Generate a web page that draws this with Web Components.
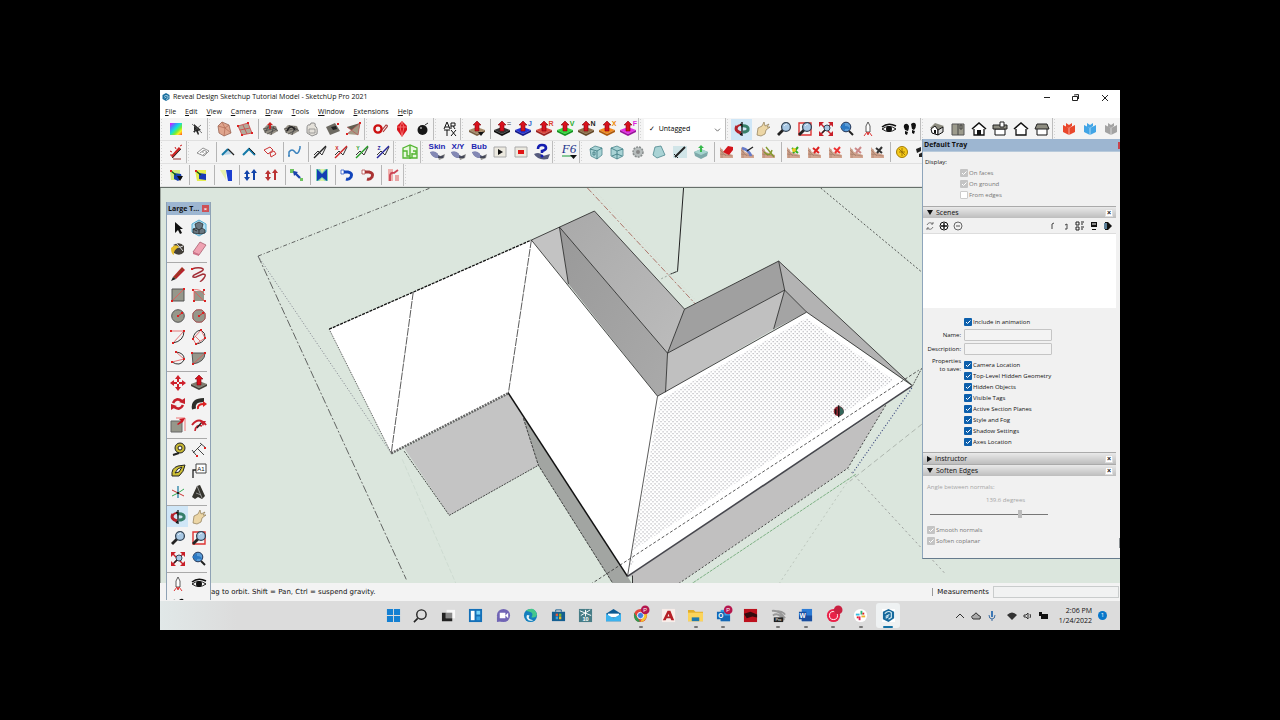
<!DOCTYPE html>
<html lang="en">
<head>
<meta charset="utf-8">
<title>Reveal Design Sketchup Tutorial Model - SketchUp Pro 2021</title>
<style>
html,body{margin:0;height:100%;background:#000;overflow:hidden}
body{box-sizing:border-box;padding:12.5vh 12.5vw;font:8px/10px "Open Sans","Noto Sans",sans-serif;color:#111}
</style>
</head>
<body>
<desktop-screen>
  <app-window>
    <title-bar slot="title">Reveal Design Sketchup Tutorial Model - SketchUp Pro 2021</title-bar>
    <menu-bar slot="menu"></menu-bar>
    <tool-bar slot="tools" tools="rainbow selplus | softsel meshred - sandup smoove stamp drape flip | keyring ruby bomb | artx | pushmix - push:= push:J push:R push:V push:N push:X push:F | @tags | orbit! pan zoom zoomwin extents prev camera look walk | iso top front right back left | ored oblue ogray"></tool-bar>
    <tool-bar slot="tools" tools="wand | quad - roofa roofb roofred - curve - cut:#222: cut:#c22:X cut:#292:Y cut:#229:Z | greenbox | skin:Skin skin:X/Y skin:Bub play stop help | fsix | cubea cubeb ring shape knife layer - stred stblue stgreen - terra:#3a2 terra:#d22 terra:#e33 terra:#c88 terra:#333 - coin steps"></tool-bar>
    <tool-bar slot="tools" tools="ya - yb - bluewall - arrows:#14a arrows:#b33 - link - bow - bend:#14b bend:#a33 - pink |"></tool-bar>
    <model-view slot="canvas"></model-view>
    <side-tray slot="tray"></side-tray>
    <tool-palette slot="palette"></tool-palette>
    <status-bar slot="status"></status-bar>
  </app-window>
  <task-bar></task-bar>
</desktop-screen>
<script>
const p=(f,d,s='')=>`<path fill="${f}" d="${d}" ${s}/>`;
const l=(c,d,w=1,s='')=>`<path fill="none" stroke="${c}" stroke-width="${w}" d="${d}" ${s}/>`;
const c=(x,y,r,f,s='')=>`<circle cx="${x}" cy="${y}" r="${r}" fill="${f}" ${s}/>`;
const t=(x,y,z,f,s,e='')=>`<text x="${x}" y="${y}" font-size="${z}" fill="${f}" font-family="Liberation Sans,sans-serif" text-anchor="middle" ${e}>${s}</text>`;
const slab=(a,b)=>p(a,'M0 9 8 6 16 9 8 13Z')+p(b,'M0 9 8 13 16 9V11L8 15 0 11Z');
const upArrow=p('#d8111c','M8 0 12 4H10V10H6V4H4Z','stroke="#7d0910" stroke-width=".6"');
const dots=(...a)=>a.map(([x,y])=>p('#d22',`M${x-1} ${y-1}h2v2h-2z`)).join('');
const lens=p('#222','M1 13 6 8 8 10 3 15Z')+c(10,6,4.4,'#a8c8e4','stroke="#345" stroke-width="1.3"')+l('#e8f3fb','M8 5Q9 3 11 3',1);
const house=p('#fff','M3 7H13V14H3Z','stroke="#111" stroke-width="1.3"')+p('#fff','M1 8 8 2 15 8','stroke="#111" stroke-width="1.6"');
const mesh=p('#948f84','M1 8 5 4 14 5 16 10 9 14 3 12Z')+l('#444','M1 8 10 6 16 10M3 12 7 4M9 14 12 5M2 10 14 7M5 13 15 8',.7);
const terrain=p('#d3a590','M2 3 6 8 15 11V14H2Z')+l('#a07864','M2 6 8 12M4 5V14M2 10 14 12',.6);
const eye=p('#fff','M1 8Q8 3 15 8 8 13 1 8Z','stroke="#111"')+c(8,8,3,'#111')+l('#111','M1 6Q7 1 15 5',1.6);
const rocket=p('#fff','M8 1Q11 4 10 11H6Q5 4 8 1Z','stroke="#333" stroke-width=".8"')+l('#d33','M4 15 7 11 8 14 9 11 12 15',1);
const cube=f=>p(f,'M2 4 8 7 14 4V11L8 14 2 11Z')+l('#fff','M8 7V14',.8,'opacity=".7"')+p(f,'M5 2 8 4V7L5 6ZM8 4 11 2V5L8 7Z');
const glass=(d,x='')=>p('#a9d3d5',d,'stroke="#4b878d" stroke-width=".8"')+x;
const wedge=p('#d1e5e8','M1 2H15V14H1Z');
const feet=p('#111','M2 4Q5 1 7 5 7 8 6 10L3 9Q1 6 2 4ZM3 10 6 11 5 14 3 13ZM9 3Q13 0 14 4 14 7 12 9L10 8ZM10 9 13 10 12 13 10 12Z');
const icons={
rainbow:()=>p('url(#rb)','M2 2H14V14H2Z')+'<defs><linearGradient id="rb" x1="0" y1="0" x2="1" y2="1"><stop stop-color="#f0f"/><stop offset=".25" stop-color="#48f"/><stop offset=".45" stop-color="#1dd"/><stop offset=".65" stop-color="#7e3"/><stop offset=".8" stop-color="#fe2"/><stop offset="1" stop-color="#f42"/></linearGradient></defs>',
selplus:()=>p('#222','M5 3 5 12 7 10 9 14 10 13 9 10 12 9Z')+l('#555','M3 3 13 12M12 4 4 11',.8),
softsel:()=>p('#dfa58d','M2 5 6 1 13 4 15 12 8 15 3 12Z','stroke="#8c5848" stroke-width=".7"')+l('#b06a54','M2 5 9 7 15 12M9 7 8 15M6 1 9 7 13 4',.7),
meshred:()=>p('#b3a99a','M1 5 11 2 15 12 5 14Z')+l('#c44','M1 5 11 2 15 12 5 14ZM3 9 13 7M6 4 10 13',.8)+dots([1,5],[11,2],[15,12],[5,14]),
sandup:()=>mesh+p('#c22','M8 1 11 4H9V8H7V4H5Z'),smoove:()=>mesh+l('#222','M4 10Q8 2 12 9',1.5),
stamp:()=>p('#e4e1da','M3 7Q3 3 6 4 6 1 10 2 12 2 11 5 14 6 13 13L8 15 3 12Z','stroke="#777" stroke-width=".8"')+l('#888','M5 8H11V12H5Z',.8),
drape:()=>p('#6d6a62','M1 6 10 2 15 10 5 14Z')+p('#222','M6 6 11 5 12 8 8 9Z')+dots([13,3]),
flip:()=>p('#625e50','M1 6 14 2 12 14Z')+p('#a39b85','M14 2 12 14 1 13Z')+l('#b55','M1 13 14 2 12 14M1 6 12 14',.7)+dots([14,2],[1,13]),
keyring:()=>c(5,8,3.6,'none','stroke="#c11" stroke-width="2.4"')+l('#a33','M9 9 13 4Q15 4 14 6L10 11',1.2),
ruby:()=>p('#d7141c','M8 0 13 5 13 9 8 16 3 9 3 5Z')+l('#ff8b8b','M3 6H13M6 6 8 15 10 6 8 1Z',.7),
bomb:()=>c(7.5,9,5,'#181818')+c(6,7,1,'#aaa')+l('#333','M10 4 13 2'),
artx:()=>l('#111','M2 8 5 1 8 8M3 6H7M9 8V2H13V5H9M11 5 13 8M2 9H8M5 9V15M9 9 14 15M14 9 9 15',1),
pushmix:()=>slab('#a78b68','#7a6044')+upArrow+p('#111','M9 11H15L12 15Z'),
push:a=>{const m={'=':['#333','#111','#888'],J:['#2233d6','#151a8a','#36c'],R:['#e0483f','#9c2320','#d43'],V:['#31dd3c','#149420','#2a2'],N:['#927049','#654a2b','#222'],X:['#f38b1e','#ad5a0c','#e80'],F:['#e62ae6','#9a129c','#d2d']}[a];return slab(m[0],m[1])+upArrow+t(15,5,7,m[2],a,'font-weight="700"')},
orbit:()=>l('#b3222c','M3 5Q0 10 7 12',3)+l('#367f6a','M7 5Q15 4 14 9 13 11 9 11',3)+l('#b3222c','M3 6Q4 4 7 4',2)+l('#111','M8 1V15M8 4 6 3M8 12 6 14',1.3),
pan:()=>p('#ecd6a6','M2 14 3 7 7 5 9 1 10 5 14 3 12 6 15 6 11 9 10 13 6 15Z','stroke="#8c7a54" stroke-width=".7"'),
zoom:()=>lens,zoomwin:()=>l('#d33','M2 2H14V14H2Z',1.4)+lens,
extents:()=>[0,90,180,270].map(r=>p('#c8202a','M0 0H5L3 2 6 5 5 6 2 3 0 5Z',`transform="rotate(${r} 8 8) translate(1 1)"`)).join('')+c(9,7,3,'#a8c8e4','stroke="#345"')+l('#222','M4 12 7 9',1.5),
prev:()=>c(7,6,4.8,'#5a9bd6','stroke="#235"')+p('#2b78c2','M1 6 6 2V5Q11 5 11 9 9 7 6 8V10Z')+l('#222','M10 10 14 14',2),
camera:()=>rocket,look:()=>eye,walk:()=>feet,
iso:()=>p('#8d8c80','M1 7 6 2 15 5 11 9Z')+p('#fff','M2 8 6 5 9 9V14L3 12Z','stroke="#111"')+p('#ddd','M9 9 14 6V11L9 14Z','stroke="#111"')+p('#111','M5 9H7V13L5 12Z'),
top:()=>p('#9c9b8d','M2 3H14V14H2Z','stroke="#555"')+l('#444','M8 3V14M10 4H12V8H10Z'),
front:()=>house+p('#111','M6 9H10V14H6Z'),
right:()=>p('#fff','M3 8H13V14H3Z','stroke="#111"')+p('#8d8c80','M1 4H15V8H1Z','stroke="#222"')+p('#fff','M8 1H12V6H8Z','stroke="#222"'),
back:()=>house,left:()=>p('#fff','M3 7H13V14H3Z','stroke="#111"')+p('#8d8c80','M3 3H13L15 8H1Z','stroke="#222"'),
ored:()=>cube('#e9472c'),oblue:()=>cube('#42a5e6'),ogray:()=>cube('#a3a3a3'),
wand:()=>l('#c22','M4 13 12 4',3)+l('#333','M4 14 13 5',1)+l('#c22','M2 7 4 8M2 11 4 11M7 3 8 5M12 2 14 1',1)+l('#933','M5 15H13',1),
quad:()=>p('#fff','M2 9 8 4 14 7 9 12Z','stroke="#777" stroke-width=".8"')+l('#777','M5 9 9 6 12 8 8 11M7 8H9',.8),
roofa:()=>p('#b9d6e8','M4 11 8 5 12 10Z')+l('#157aa8','M2 11 8 5',2)+l('#222','M8 5 14 11',1.2),roofb:()=>l('#157aa8','M2 11 8 5 14 11',2)+l('#222','M8 4 14 10',1),
roofred:()=>l('#c33','M2 6 8 3 11 6 6 10ZM8 9 12 7 14 10 9 13Z',1),
curve:()=>l('#3c83bd','M2 12V8Q5 4 8 8T13 4V2',1.5)+c(2,12,1,'#3c83bd'),
cut:(k,x)=>l('#333','M2 11 6 7 10 11 14 3',1)+l(k,'M2 14 14 2',1.4)+t(4,6,5,k,x||'','font-weight="700"'),
greenbox:()=>p('#e9f9df','M1 4 8 1 15 4V14H1Z','stroke="#54b533" stroke-width="1.3"')+l('#54b533','M1 7H5V12H8M8 1V15M11 7H14V10H10M10 14V9',1.4),
skin:x=>p('#555a7d','M1 8Q3 13 8 14H14L15 11Q10 14 8 9Z')+p('#8388b4','M1 8Q6 6 9 10L9 14Q3 14 1 8Z')+p('#3338','M9 13 16 10 15 14 10 16Z')+t(8,5,8,'#1b25b0',x,'font-weight="700"'),
play:()=>p('#ece9df','M2 3H14V13H2Z','stroke="#aaa"')+p('#111','M6 5 11 8 6 11Z'),stop:()=>p('#ece9df','M2 3H14V13H2Z','stroke="#aaa"')+p('#e01515','M5 6H11V10H5Z'),
help:()=>p('#555a7d','M0 10Q6 7 9 12L16 10 14 15Q4 17 0 10Z')+l('#141eb0','M4 5Q4 1 8 1 12 1 12 4 12 6 8 7V9',2.6)+c(8,12,1.5,'#141eb0'),
fsix:()=>t(8,9,13,'#23348c','F6','style="font-family:Liberation Serif;font-style:italic"')+l('#159a38','M1 12H12')+p('#111','M9 11H16L12.5 15Z'),
cubea:()=>glass('M2 5 7 2 14 4V11L9 15 3 12Z','<path fill="none" stroke="#37757b" stroke-width=".8" d="M2 5 9 7 14 4M9 7V15M5 8H7V11H5Z"/>'),
cubeb:()=>glass('M2 4 8 2 14 5V12L8 15 2 12Z','<path fill="none" stroke="#37757b" stroke-width=".8" d="M2 4 8 7 14 5M8 7V15M3 12 8 10 13 12"/>'),
ring:()=>c(8,8,5,'#b7bdbd','stroke="#878c8c" stroke-width="1.5" stroke-dasharray="2 1"')+c(8,8,2,'#888'),
shape:()=>glass('M4 3 10 2 14 11 6 14 2 11Z'),knife:()=>wedge+l('#222','M3 13 13 3',2)+l('#222','M2 10 6 14'),
layer:()=>p('#7ea9aa','M1 8 8 5 15 8 14 12 8 15 2 12Z')+p('#a5d4cf','M1 8 8 5 15 8 8 11Z')+p('#38b84c','M8 1 11 4H9V8H7V4H5Z'),
stred:()=>terrain+p('#d4151c','M5 8 10 2 15 3V6L11 11Z'),stblue:()=>terrain+l('#667bc8','M3 4Q10 6 12 12',2.6)+l('#222','M8 7 14 3',1.4),
stgreen:()=>terrain+l('#829a2e','M4 8Q10 14 12 6M6 3 14 13',1.4),terra:k=>terrain+l(k,'M7 4 13 9M13 3 8 9',2)+(k==='#3a2'?c(9,6,2,'#ec2'):''),
coin:()=>c(8,8,5.5,'#f5c918','stroke="#a37c08"')+l('#8a6504','M8 4V12M5 8H11M5 5 11 11',.8),steps:()=>p('#222','M1 5 6 3V7L2 9ZM4 10 8 8V13H4Z'),
ya:()=>p('#d5ec7f','M2 3H12V13H3Z')+p('#173fae','M6 6 13 7 14 11 10 14 6 12Z')+p('#111','M9 9H15L12 14Z')+l('#161','M3 4 8 8',1.4)+dots([3,4]),yb:()=>p('#e4ed4f','M2 3H13V14H4Z')+p('#1737b8','M6 6 13 7V13L6 12Z')+l('#151','M3 4 8 8',1.4)+dots([3,4]),
bluewall:()=>p('#e7efad','M2 3H8V13Z')+p('#1c3fd1','M8 3H14V14H10Z'),
arrows:k=>p(k,'M4 3 7 7H5V10H7L4 14 1 10H3V7H1ZM10 13V6H8L11 2 14 6H12V13Z'),
link:()=>l('#1a43ad','M5 5 11 11',2.4)+p('#6fc261','M1 2H5V6H1ZM11 11H14V14H11Z')+p('#1a43ad','M4 4 9 5 5 9Z'),
bow:()=>p('#74d1b0','M2 2H14V14H2Z')+p('#143eb4','M3 2 8 7 13 2V14L8 10 3 14Z')+p('#dcefa5','M6 2H11L8 6ZM5 14H11L8 11Z'),
bend:k=>l(k,'M4 5H9Q14 6 12 10 10 13 7 12',3)+p('#fff','M2 3H5V7H2Z',`stroke="${k}" stroke-width=".7"`),
pink:()=>p('#efb0ad','M3 2H8V14H3Z')+l('#c45','M5 14V8Q6 5 9 6L13 3',1.8)+p('#e9a5a5','M10 8H14V14H10Z'),
arrow:()=>p('#111','M5 2V13L8 10 10 14 12 13 10 9H13Z'),
component:()=>p('#b2e1f6','M8 0 15 4V12L8 16 1 12V4Z','stroke="#59aed1"')+p('#697780','M4 4 8 2 12 4 11 8 14 10V13L9 14 2 13V9L5 8Z','stroke="#222" stroke-width=".7"')+l('#222','M5 8 8 10 11 8M8 10V14M2 9 6 11',.8),
paint:()=>p('#44403a','M3 4Q10 0 14 5V11Q10 16 4 12Z')+l('#ddd','M3 4Q7 8 13 5M6 2Q10 6 13 10',1)+p('#e6bd2a','M1 7Q6 2 9 6 3 9 4 14 1 13 1 7Z'),
erase:()=>p('#efa2b2','M2 11 9 1 15 4 8 14Z','stroke="#a85f70" stroke-width=".8"')+p('#cd7288','M2 11 8 13V15L2 13Z'),
pencil:()=>p('#b7222c','M3 11 12 1 15 4 6 13Z')+p('#222','M1 15 3 11 6 13Z')+l('#661','M4 12 13 2',.7),
freehand:()=>l('#a32e36','M1 3Q6 1 10 2 14 3 11 5L3 9Q0 12 5 11L12 8Q16 8 13 12T9 15',1.5)+dots([1,3]),
rect:()=>p('#96978b','M2 2H14V14H2Z','stroke="#555"')+l('#e55','M2 14 14 2',.8)+dots([2,14],[14,2]),
rrect:()=>p('#96978b','M3 4H13V14H3Z')+l('#e55','M3 14V4L13 14M2 3Q9 1 14 8',.8)+dots([2,3],[3,14],[13,3],[14,14]),
circle:()=>c(8,8,6.3,'#96978b','stroke="#555"')+l('#d22','M8 8 12 5')+dots([8,8],[12,5]),
polygon:()=>p('#96978b','M5 2H11L14 5V11L11 14H5L2 11V5Z','stroke="#966"')+c(8,8,6.5,'none','stroke="#a55" stroke-width=".7"')+l('#d22','M8 8 12 5')+dots([8,8],[12,5]),
arc:()=>l('#333','M14 2Q14 12 3 14')+l('#d55','M1 2H14L3 14',.8)+dots([1,2],[14,2],[3,14]),
arc2:()=>l('#333','M2 10Q3 2 10 1 15 4 14 9 12 14 5 15',1)+l('#d55','M10 1 14 9 5 15 2 10 10 1M4 7 9 12',.8)+dots([10,1],[2,10],[14,9],[5,15]),
arc3:()=>l('#333','M6 2Q15 3 14 10 10 17 2 12')+l('#d55','M6 2 14 9 2 12',.8)+dots([2,12],[14,9],[6,2]),
pie:()=>p('#96978b','M1 3H14Q14 12 2 14Z','stroke="#555"')+l('#d55','M14 3 2 14',.8)+dots([1,3],[14,3],[2,14]),
move:()=>[0,90,180,270].map(r=>p('#cf202b','M8 0 11 4H9V7H7V4H5Z',`transform="rotate(${r} 8 8)"`)).join(''),
pushpull:()=>slab('#7e7b6d','#45423a')+upArrow,
rotate:()=>l('#c6202b','M3 7Q6 1 12 5M13 9Q10 15 4 11',2.6)+p('#c6202b','M9 6 15 2V8ZM7 10 1 14V8Z'),
follow:()=>l('#2e2e2a','M3 13Q1 4 13 4',4)+l('#d22','M7 13Q6 8 13 8',2)+p('#d22','M12 5 16 8 12 11Z'),
scale:()=>p('#96978b','M1 4H12V15H1Z','stroke="#666"')+l('#e77','M6 1H15V14')+p('#ce1420','M8 8 13 5 15 1 9 2 11 4 7 7Z'),
offset:()=>l('#c6202b','M1 8Q8-1 15 8',2)+l('#c6202b','M4 14Q5 7 11 9',1.6)+l('#222','M6 11 11 5',1.3)+p('#c6202b','M9 4 15 4 12 9Z'),
tape:()=>c(10,6,5,'#c7b735','stroke="#222"')+c(10,6,2,'#fff','stroke="#222"')+l('#222','M9 11 3 13',2),
dim:()=>l('#333','M2 11 11 2M1 8 5 13M9 1 15 6M6 6 13 13',.9)+dots([6,14],[14,6]),
prot:()=>p('#cbbd34','M2 13Q1 5 8 3L15 2Q14 9 9 13Z','stroke="#222"')+p('#fff','M5 10Q7 5 12 4L9 9Z','stroke="#222"'),
label:()=>p('#fff','M5 1H15V10H5Z','stroke="#444"')+t(10,8,6,'#111','A1')+l('#222','M2 15V7H5',1.3),
axes:()=>l('#c33','M8 9 14 12M2 6 8 9')+l('#38a','M8 14V2',1.4)+l('#3a5','M8 9 14 5M2 12 8 9')+l('#222','M7 9H9',2),
text3d:()=>p('#35342e','M6 2 9 1 14 12 11 15 7 13 4 15 1 13Z')+l('#aaa','M6 2 11 14M5 9 10 11',.8)
};
const svg=(name,cls='')=>{const[n,...a]=name.split(':');return `<svg class="${cls}" viewBox="0 0 16 16" width="16" height="16" aria-hidden="true">${icons[n](...a)}</svg>`};
function define(tag,css,html){
  customElements.define(tag,class extends HTMLElement{
    connectedCallback(){
      if(this.shadowRoot)return;
      this.attachShadow({mode:'open'}).innerHTML=`<style>:host,*{box-sizing:border-box}button{font:inherit;color:inherit;border:0;background:none;padding:0;margin:0}svg{display:block;overflow:visible}${css}</style>`+(typeof html==='function'?html(this):html);
    }
  });
}
define('desktop-screen',':host{display:grid;grid-template-rows:minmax(0,1fr) 29px;height:100%;overflow:hidden;background:#dcdcdc}','<slot></slot>');
define('app-window',`:host{display:flex;flex-direction:column;position:relative;min-height:0;background:#f3f3f3}
.canvas{flex:1;min-height:0;border-top:1px solid #66706a}
.tray{position:absolute;right:0;top:49px;width:199px}
.palette{position:absolute;left:6px;top:112px;bottom:1px;width:45px}`,
`<slot name="title"></slot><slot name="menu"></slot><slot name="tools"></slot><div class="canvas"><slot name="canvas"></slot></div><slot name="status"></slot><div class="tray"><slot name="tray"></slot></div><div class="palette"><slot name="palette"></slot></div>`);
define('title-bar',`:host{display:flex;align-items:center;height:14px;flex:none;padding:0 12px 0 2px;gap:3px;background:#fff;font-size:7px}
.logo{width:8px;height:8px}span{flex:1}button{width:9px;height:9px;margin-left:17px}`,
`<svg class="logo" viewBox="0 0 16 16"><path fill="#1b6f9f" d="M8 0 15 4V12L8 16 1 12V4Z"/><path fill="none" stroke="#bfe0ef" stroke-width="1.5" d="M4 7Q8 3 12 6V11L8 13M5 10 9 8"/></svg><span><slot></slot></span>
<button aria-label="Minimize"><svg viewBox="0 0 9 9"><path stroke="#222" d="M2 4.5H8"/></svg></button><button aria-label="Restore"><svg viewBox="0 0 9 9"><path fill="none" stroke="#222" d="M1.500 3.500H6.500V7.500H1.500ZM3 2 7.500 1.500V6"/></svg></button><button aria-label="Close"><svg viewBox="0 0 9 9"><path stroke="#222" d="M2 2 8 8M8 2 2 8"/></svg></button>`);
define('menu-bar',`:host{display:flex;gap:9px;height:14px;flex:none;padding-left:5px;background:#fff;font-size:7px}
button{display:inline-block;line-height:13px}button::first-letter{text-decoration:underline}`,
['File','Edit','View','Camera','Draw','Tools','Window','Extensions','Help'].map(x=>`<button>${x}</button>`).join(''));
define('tool-bar',`:host{display:flex;height:23px;flex:none;background:#f4f4f4;border-bottom:1px solid #e0e0e0;overflow:hidden}
.group{display:flex;align-items:center;flex:none;padding-left:5px;border-right:1px solid #bdbdbd;background:radial-gradient(circle,#d4d4d4 1px,#0000 1px) 0 0/3px 3px repeat-y}
.group:last-child{border-right:0}
.tool{display:grid;place-items:center;width:21px;height:21px;flex:none}
.tool svg{width:16px;height:16px}
.on{background:#cfe6f7}
i{width:4px;height:20px;border-right:1px solid #b5b5b5}
label{display:flex;align-items:center;width:81px;height:21px;background:#fff;padding:0 5px}
select{appearance:none;flex:1;border:0;background:none;font:inherit;font-size:7px;padding:0;outline:0}
label svg{width:5px;height:5px}`,
el=>el.getAttribute('tools').split('|').map(g=>'<div class="group">'+g.trim().split(' ').filter(Boolean).map(n=>n==='-'?'<i></i>':n==='@tags'?'<label><select aria-label="Tag"><option>✓&nbsp; Untagged</option></select><svg viewBox="0 0 6 6"><path fill="none" stroke="#555" d="M0 2 3 5 6 2"/></svg></label>':`<button class="tool ${n.endsWith('!')?'on':''}" aria-label="${n.replace(/[:!].*/,'')}">${svg(n.replace('!',''))}</button>`).join('')+'</div>').join(''));
define('tool-palette',`:host{display:flex;flex-direction:column;height:100%;overflow:hidden;background:#f3f3f3;border:1px solid #8fa2b5;border-top:0;border-bottom:0}
header{display:flex;align-items:center;justify-content:space-between;height:13px;flex:none;background:#9db6d1;padding:0 1px;font-weight:700;font-size:7px}
header button{background:#cd5055;color:#fff;width:7px;height:7px;font-size:6px;line-height:6px}
main{display:grid;grid-template-columns:21px 21px;grid-auto-rows:auto;padding-top:2px}
.tool{display:grid;place-items:center;height:21px}.tool svg{width:16px;height:16px}.on{background:#cfe6f7}
hr{grid-column:1/3;width:40px;height:4px;border:0;border-bottom:1px solid #aaa;margin:0}`,
`<header><span>Large T...</span><button aria-label="Close">×</button></header><main>`+'arrow component paint erase - pencil freehand rect rrect circle polygon arc arc2 arc3 pie - move pushpull rotate follow scale offset - tape dim prot label axes text3d - orbit! pan zoom zoomwin extents prev - camera look walk steps'.split(' ').map(n=>n==='-'?'<hr>':`<button class="tool ${n.endsWith('!')?'on':''}" aria-label="${n.replace('!','')}">${svg(n.replace('!',''))}</button>`).join('')+'</main>');
const dash=(d,k='#222',a='2 2',w=.8)=>l(k,d,w,`stroke-dasharray="${a}"`);
define('model-view',':host{display:block;height:100%;background:#dbe6dd;overflow:hidden}svg{width:100%;height:100%}',
`<svg viewBox="160 187 960 396" preserveAspectRatio="xMinYMin slice" role="img" aria-label="House roof model">
<defs><pattern id="dots" width="4" height="4" patternUnits="userSpaceOnUse"><path fill="#8e8f96" d="M0 0h1v1h-1zM2 2h1v1h-1z"/></pattern>
<linearGradient id="ga" x1="0" y1="0" x2="1" y2="1"><stop stop-color="#a9a9a9"/><stop offset="1" stop-color="#bcbcbc"/></linearGradient>
<linearGradient id="gb" x1="0" y1="0" x2="1" y2="1"><stop stop-color="#999"/><stop offset="1" stop-color="#aaa"/></linearGradient></defs>
${p('#9aa29b','M160 187h1v396h-1z')}
${dash('M258 255 430 187','#444','4 2 1 2')}${dash('M258 255 406 578','#444','8 2 2 2')}${dash('M258 255 391 452','#667','1 2')}
${dash('M402 458 456 583','#cbd8ce','5 2')}${dash('M587 187 695 303','#a35b50','6 2 2 2')}${dash('M592 187 694 298','#d3d9d0','1 2')}
${l('#222','M683 187 677 270 670 273',1)}${dash('M677 270 660 278','#8a958d')}${dash('M820 187 921 271','#333','2 2')}
${dash('M847 467 945 573','#888','2 3')}${dash('M849 477 778 583','#b4beb4','2 3')}${dash('M921 423 849 480','#a2aaa3','5 3')}${dash('M855 473 690 583','#64a26b','3 1')}${dash('M911 387 851 473','#3a477e','1 2',1.2)}${dash('M921 367 911 386','#333','2 1')}
${p('#c4c4c4','M404 447 508 392 524 417 538 464 449 514Z')}
${p('#a2a5a2','M523 416 627 575 632 583H613L538 464Z')}
${p('#c1c0c0','M627 575 885 404 847 467 677 583H632V575Z')}
${p('#c3c3c3','M531 239 559 226 568 284Z')}
${p('url(#ga)','M559 226 594 210 684 308 667 352Z')}${p('url(#gb)','M559 226 667 352 665 391 657 395 568 283Z')}
${p('#a0a0a0','M684 308 778 260 784 289 667 352Z')}${p('#c0c0c0','M667 352 784 289 773 328 665 391Z')}${p('#a4a4a4','M784 289 806 311 773 328Z')}${p('#b3b3b3','M778 260 911 384 806 311 784 289Z')}
${p('#fff','M329 328 531 239 657 395 806 311 911 385 627 575 508 392 391 452Z')}
${p('url(#dots)','M660 398 806 317 893 379 632 549 633 562 628 567Z')}
${l('#222','M531 239 594 210 684 308 778 260 911 384M559 226 568 283M559 226 667 352 784 289 806 311 911 384M684 308 667 352 665 391M778 260 784 289 773 328M531 239 657 395 806 311',.8)}
${dash('M329 328 531 239','#111','3 1',1.3)}${dash('M329 328 391 452','#222','1 1')}${dash('M391 452 508 392','#666','2 1',2.5)}
${l('#333','M413 291 391 452M531 239 508 392',.8,'stroke-dasharray="8 1"')}${l('#333','M657 395 627 575',.8)}
${l('#111','M508 392 627 575',1.5)}${l('#46464d','M627 575 911 385',1.6)}
${dash('M590 583 918 369','#333','3 2')}${dash('M404 450 449 514 538 464','#222','2 1')}${dash('M523 417 538 464 613 583','#222','3 1')}${dash('M885 404 847 467 677 583','#222','2 2')}${l('#333','M632 574V583')}
<g transform="translate(832 404)">${c(6,6,5,'#8e2732')}${p('#33665a','M7 1Q12 4 11 8L7 11Z')}${l('#111','M6 0V12M3 4V9',1.3)}</g>
</svg>`);
define('tray-check',`:host{display:block;height:11px}label{display:flex;align-items:center;gap:1px;height:11px;white-space:nowrap;font-size:6px}
input{appearance:none;width:8px;height:8px;margin:0;border-radius:1px;background:#0c5fac}
input:checked{background:#0c5fac url('data:image/svg+xml,<svg xmlns="http://www.w3.org/2000/svg" viewBox="0 0 8 8"><path fill="none" stroke="white" d="M2 4 3.500 5.500 6.500 2.500"/></svg>')}
input:disabled{background-color:#c4c4c4}input:disabled:not(:checked){background:#fff;border:1px solid #ccc}
input:disabled+span{color:#777}`,
el=>`<label><input type="checkbox" ${el.hasAttribute('off')?'':'checked'} ${el.hasAttribute('disabled')?'disabled':''}><span><slot></slot></span></label>`);
define('tray-head',`:host{display:flex;align-items:center;height:12px;margin-right:5px;padding:0 3px 0 4px;gap:3px;background:linear-gradient(#e9e9e9,#bdbdbd);border-top:1px solid #aaa;font-size:7px}
b{border:3px solid #0000;border-top:5px solid #111;border-bottom:0}b.shut{border:3px solid #0000;border-left:5px solid #111;border-right:0}
span{flex:1}button{width:8px;height:8px;background:#fff;border:1px solid #ddd;font:700 7px/5px "Liberation Sans"}`,
el=>`<b class="${el.hasAttribute('shut')?'shut':''}"></b><span><slot></slot></span><button aria-label="Close section">×</button>`);
define('side-tray',`:host{display:block;background:linear-gradient(#8a8f92,#8a8f92) 100% 399px/2px 10px no-repeat #f1f1f1;border-left:1px solid #8ea5bb;border-bottom:1px solid #667b8d;font-size:6px;height:420px}
header{display:flex;justify-content:space-between;align-items:center;height:13px;background:#9db6d1;font-weight:700;font-size:7px;padding-left:1px;border-bottom:1px solid #b8cadb}
header button{width:3px;height:7px;background:#c8434b}
.display{padding:5px 0 5px 2px;height:54px}.display div{padding-left:35px}
.bar{display:flex;align-items:center;height:15px;padding:0 8px 0 2px;gap:4px}.bar svg{width:10px;height:10px}.bar span{flex:1}
.list{height:75px;margin-right:5px;background:#fff;border-top:1px solid #ddd}
.form{display:grid;grid-template-columns:38px 88px;column-gap:3px;row-gap:2px;padding:8px 0 2px;align-items:center;text-align:right;line-height:8px}
.form tray-check{grid-column:2}.form input{width:88px;height:12px;margin:0;border:1px solid #c5c5c5;background:#f3f3f3;border-radius:1px;outline:0}
.props{display:flex;gap:3px;height:95px;text-align:right;line-height:8px}.props p{width:38px;padding-left:6px;margin:0;flex:none}.props div{padding-top:2px;text-align:left}
.soft{padding:7px 0 0 4px;color:#a5a5a5}.soft p{margin:0;line-height:8px}.deg{padding:5px 0 4px 59px}
input[type=range]{appearance:none;display:block;width:118px;height:12px;margin:0 0 4px 3px;background:linear-gradient(#777,#777) 0 50%/100% 1px no-repeat}
input[type=range]::-webkit-slider-thumb{appearance:none;width:4px;height:8px;background:#bcbcbc}`,
`<header><span>Default Tray</span><button aria-label="Close tray"></button></header>
<section class="display">Display:<div><tray-check disabled>On faces</tray-check><tray-check disabled>On ground</tray-check><tray-check disabled off>From edges</tray-check></div></section>
<tray-head>Scenes</tray-head>
<div class="bar">
<button aria-label="Update"><svg viewBox="0 0 10 10">${l('#777','M2 4Q4 0 8 3M8 6Q6 10 2 7M8 1V3H6M2 9V7H4')}</svg></button>
<button aria-label="Add">${`<svg viewBox="0 0 10 10">${c(5,5,4,'#fff','stroke="#111"')}${l('#111','M5 2V8M2 5H8',1.4)}</svg>`}</button>
<button aria-label="Remove"><svg viewBox="0 0 10 10">${c(5,5,4,'none','stroke="#666"')}${l('#555','M3 5H7')}</svg></button><span></span>
<button aria-label="Move down"><svg viewBox="0 0 10 10">${l('#444','M5 8V3L7 2')}</svg></button><button aria-label="Move up"><svg viewBox="0 0 10 10">${l('#444','M4 8H6V3L4 4')}</svg></button><button aria-label="View"><svg viewBox="0 0 10 10">${l('#222','M1 1H4V4H1ZM1 6H4V9H1ZM6 1H9M6 3H8M6 6H9M6 8H8')}</svg></button><button aria-label="Details"><svg viewBox="0 0 10 10">${p('#111','M2 1H8V6H2ZM3 8H7V9H3Z')}${l('#fff','M3 3H7')}</svg></button><button aria-label="Menu"><svg viewBox="0 0 10 10">${p('#111','M5 1 9 5 5 9H2V1Z')}${p('#5b7f98','M1 2H4V8H1Z')}</svg></button></div>
<div class="list"></div>
<div class="form"><tray-check>Include in animation</tray-check><label for="n">Name:</label><input id="n"><label for="d">Description:</label><input id="d"></div>
<div class="props"><p>Properties to save:</p><div>${['Camera Location','Top-Level Hidden Geometry','Hidden Objects','Visible Tags','Active Section Planes','Style and Fog','Shadow Settings','Axes Location'].map(x=>`<tray-check>${x}</tray-check>`).join('')}</div></div>
<tray-head shut>Instructor</tray-head><tray-head>Soften Edges</tray-head>
<section class="soft"><p><label for="a">Angle between normals:</label></p><p class="deg">139.6 degrees</p><input id="a" type="range" min="0" max="180" value="139" disabled><tray-check disabled>Smooth normals</tray-check><tray-check disabled>Soften coplanar</tray-check></section>`);
define('status-bar',`:host{display:flex;align-items:center;height:18px;flex:none;padding:0 2px 0 51px;background:#f3f3f3;font:7px/10px "DejaVu Sans",sans-serif}
span{flex:1}label{border-left:1px solid #999;padding:0 4px;line-height:8px}input{width:126px;height:12px;border:1px solid #c9cccc;background:#f1f2f2;outline:0}`,
`<span>ag to orbit. Shift = Pan, Ctrl = suspend gravity.</span><label for="m">Measurements</label><input id="m">`);
const tile=(k,x)=>p(k,'M1 1H15V15H1Z')+x;
const badge=c(13,2,4.6,'#b5174d')+t(13,4,6,'#fff','P');
const task={
Start:p('#1580d2','M1 1H7.500V7.500H1ZM8.500 1H15V7.500H8.500ZM1 8.500H7.500V15H1ZM8.500 8.500H15V15H8.500Z'),
Search:c(9,7,5,'none','stroke="#222" stroke-width="1.5"')+l('#222','M5 11 1 15',1.7),
'Task view':p('#f8f8f8','M6 2H15V11H6Z')+p('#888','M5 5H12V11H5Z')+p('#222','M1 5H5V11H12V14H1Z'),
Widgets:tile('#1470b8',p('#fff','M3 3H7V13H3Z')+p('#77d3fa','M9 3H13V7H9Z')+p('#369fe0','M9 9H13V13H9Z')),
Chat:c(8,8,7,'#7165b5')+p('#7165b5','M1 9V15L7 14Z')+p('#fff','M4 5H10V11H4ZM10 8 13 5V11Z'),
Edge:c(8,8,7,'#137fbd')+p('#45c78c','M3 3Q12-3 15 7 14 11 9 10 12 5 7 4Z')+p('#e6f4f8','M7 8Q4 12 11 13 6 15 4 11 3 6 7 8Z'),
Store:p('#155f91','M1 4H15V14H1Z')+l('#155f91','M5 4V2H11V4')+p('#e85938','M5 6H7.500V8.500H5Z')+p('#75b934','M8.500 6H11V8.500H8.500Z')+p('#34a3df','M5 9H7.500V12H5Z')+p('#efba20','M8.500 9H11V12H8.500Z'),
'Layout 10':tile('#477d87',l('#fff','M2 3 14 8M3 8 13 2M8 2V9',1)+t(8,14,6,'#fff','10','font-weight="700"')),
Mail:p('#0b5992','M0 6 8 1 16 6V14H0Z')+p('#fff','M2 6H14V10H2Z')+p('#3bb2ee','M0 6 8 11 16 6V14H0Z'),
Chrome:c(8,8,7,'#e4463b')+p('#2e9b50','M1 5 7 15Q1 15 1 5Z')+p('#f5c52c','M8 15 12 5H15Q15 14 8 15Z')+p('#2e9b50','M1 5 5 11 8 15 2 12Z')+c(8,8,3.4,'#3f7fe0','stroke="#fff"')+badge,
AutoCAD:tile('#f8eeea',p('#b51f26','M2 13 7 3H10L14 13H11L10 11H6L5 13ZM7 9H9L8 6Z')),
Files:p('#e2ae2b','M0 2H6L8 4H16V14H0Z')+p('#fcd45b','M0 5H16V14H0Z')+p('#1e79ae','M4 10H12V14H4Z'),
Outlook:p('#39a4e7','M5 2H15V14H5Z')+p('#1467b5','M5 8H15V14H5ZM1 4H9V12H1Z')+t(5,11,7,'#fff','O','font-weight="700"')+badge,
'V-Ray':tile('#bd111d',p('#340b0e','M1 6 8 4 15 7V10L10 9 4 11Z')),
'Earth Pro':l('#999','M1 3Q9 2 15 11M2 8Q8 4 14 13M3 3Q13 3 15 7',2)+p('#222','M3 10H13V15H3Z')+t(8,14,4,'#fff','Pro'),
Word:p('#2c7bd5','M4 1H15V14H4Z')+p('#194e9f','M4 8H15V14H4ZM1 4H9V12H1Z')+t(5,11,7,'#fff','W','font-weight="700"'),
Recorder:c(8,8,7,'#e92148')+c(8,8,4.3,'none','stroke="#fff"')+c(13,2,4.6,'#ca2141'),
Slack:c(8,8,7,'#fff')+l('#36bde2','M3 7H7',2)+l('#2eb67d','M9 3V7',2)+l('#ecb22e','M9 9H13',2)+l('#e01e5a','M7 9V13',2)+dots([5,10],[11,6]),
SketchUp:tile('#fff',p('#17699c','M8 1 14 4V11L8 15 2 12V4Z')+l('#d8eef7','M4 6Q8 2 11 5V10L8 12M5 9 9 7M5 11 8 9',1.2))};
const running=['Chrome','Files','Outlook','Earth Pro','Word','Recorder','Slack'];
define('task-bar',`:host{display:grid;grid-template-columns:1fr 523px 1fr;align-items:center;background:linear-gradient(90deg,#e1e8e8,#dcdcdc 8%)}
nav{grid-column:2;display:flex;justify-content:space-between;padding:0 2px}
nav button{position:relative;display:grid;place-items:center;width:24px;height:25px;border-radius:3px}nav svg{width:15px;height:15px}
.run::after{content:"";position:absolute;left:10px;bottom:0;width:4px;height:2px;border-radius:1px;background:#777}
.active{background:#eff2f3}.active::after{left:7px;width:10px;background:#1572a5}
.tray{display:flex;justify-content:flex-end;align-items:center;gap:6px;padding-right:14px;font-size:7px;line-height:10px;text-align:right}.tray svg{width:10px;height:10px}
time{margin-left:4px}.n{width:9px;height:9px;border-radius:5px;background:#0877ca;color:#fff;font-size:6px;line-height:9px;text-align:center}`,
`<nav>${Object.entries(task).map(([n,g])=>`<button aria-label="${n}" class="${n==='SketchUp'?'run active':running.includes(n)?'run':''}"><svg viewBox="0 0 16 16">${g}</svg></button>`).join('')}</nav>
<div class="tray"><svg viewBox="0 0 10 10">${l('#333','M1 7 5 3 9 7')}</svg><svg viewBox="0 0 10 10">${p('#aaa','M2 8Q-1 5 3 4 5 0 7 4 11 5 9 8Z','stroke="#333"')}</svg><svg viewBox="0 0 10 10">${p('#3c78b5','M4 0H6V6H4Z')}${l('#3c6ca0','M2 4Q2 8 5 8 8 8 8 4M5 8V10')}</svg><svg viewBox="0 0 10 10" style="margin-left:4px">${p('#333','M0 4Q5-1 10 4L5 9Z')}</svg><svg viewBox="0 0 10 10">${l('#333','M1 4H3L5 2V8L3 6H1ZM7 3Q8 5 7 7')}</svg><svg viewBox="0 0 10 10">${p('#111','M2 3H9V8H2ZM0 1H3V5H0Z')}</svg><time>2:06 PM<br>1/24/2022</time><span class="n">1</span></div>`);
</script>
</body>
</html>
